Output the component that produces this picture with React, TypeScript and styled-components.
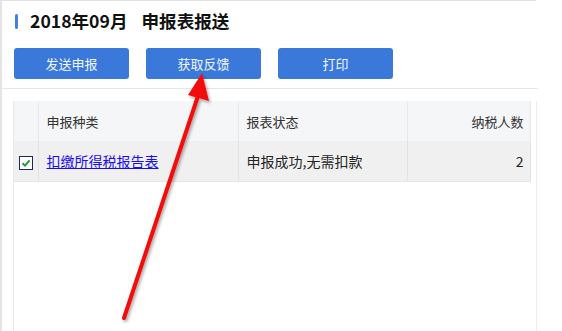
import React from "react";
import styled, { createGlobalStyle } from "styled-components";

const GlobalStyle = createGlobalStyle`
  html, body {
    margin: 0;
    padding: 0;
    background: #ffffff;
  }
  body {
    font-family: "Noto Sans CJK SC", "Noto Sans", sans-serif;
    color: #333333;
  }
`;

const Page = styled.div`
  position: relative;
  width: 562px;
  height: 331px;
  overflow: hidden;
  background: #ffffff;
  border-left: 2px solid #e4e4e4;
  box-sizing: border-box;
`;

const Panel = styled.div`
  width: 534px;
  height: 100%;
  border-top: 1px solid #e2e2e2;
  display: flex;
  flex-direction: column;
`;

const TitleRow = styled.div`
  display: flex;
  align-items: center;
  gap: 12px;
  padding: 9px 0 0 13px;
  height: 22px;
`;

const TitleMark = styled.span`
  width: 3px;
  height: 15px;
  border-radius: 2px;
  background: #3d82e6;
`;

const Title = styled.h1`
  margin: 0;
  font-size: 17.6px;
  font-weight: 700;
  color: #111111;
  line-height: 22px;
  & > span + span {
    margin-left: 14px;
  }
`;

const Toolbar = styled.div`
  display: flex;
  gap: 17px;
  padding: 16px 0 9px 12px;
  width: 536px;
  border-bottom: 1px solid #e6e6e6;
  box-sizing: border-box;
`;

const ActionButton = styled.button`
  width: 115px;
  height: 31px;
  border: none;
  border-radius: 3px;
  background: #3a79d9;
  color: #f2f6fd;
  font-family: "Noto Sans CJK SC", sans-serif;
  font-size: 13px;
  padding: 0;
  cursor: pointer;
`;

const TableArea = styled.div`
  flex: 1;
  margin: 12px 0 0 11px;
  width: 522px;
  border-left: 1px solid #e8e8e8;
  border-right: 1px solid #ededed;
`;

const Table = styled.table`
  border-collapse: collapse;
  table-layout: fixed;
  width: 516px;
`;

const HeadCell = styled.th<{ $align?: string; $w: number }>`
  width: ${(p) => p.$w}px;
  height: 40px;
  padding: 0 6px 0 8px;
  background: #f5f6f8;
  border-right: 1px solid #e9e9e9;
  font-size: 13px;
  font-weight: 400;
  color: #333333;
  text-align: ${(p) => p.$align || "left"};
  box-sizing: border-box;
`;

const Cell = styled.td<{ $align?: string }>`
  height: 40px;
  padding: 0 6px 0 8px;
  background: #f0f0f0;
  border-right: 1px solid #e2e2e2;
  border-bottom: 1px solid #e6e6e6;
  font-size: 14px;
  color: #222222;
  text-align: ${(p) => p.$align || "left"};
  box-sizing: border-box;
`;

const CheckCell = styled(Cell)`
  padding: 0 0 0 5px;
`;

const Check = styled.span`
  display: inline-flex;
  align-items: center;
  justify-content: center;
  width: 14px;
  height: 14px;
  border: 1.5px solid #1b2a5c;
  background: #ffffff;
  box-sizing: border-box;
  vertical-align: middle;
`;

const ReportLink = styled.a`
  color: #1a0df0;
  text-decoration: underline;
  font-size: 14px;
`;

const Arrow = styled.svg`
  position: absolute;
  left: 0;
  top: 0;
  pointer-events: none;
`;

const columns = [
  { key: "check", label: "", w: 24 },
  { key: "type", label: "申报种类", w: 200 },
  { key: "state", label: "报表状态", w: 169 },
  { key: "count", label: "纳税人数", w: 123, align: "right" },
];

export default function App() {
  return (
    <>
      <GlobalStyle />
      <Page>
        <Panel>
          <TitleRow>
            <TitleMark />
            <Title>
              <span>2018年09月</span>
              <span>申报表报送</span>
            </Title>
          </TitleRow>
          <Toolbar>
            <ActionButton>发送申报</ActionButton>
            <ActionButton>获取反馈</ActionButton>
            <ActionButton>打印</ActionButton>
          </Toolbar>
          <TableArea>
            <Table>
              <thead>
                <tr>
                  {columns.map((c) => (
                    <HeadCell key={c.key} $w={c.w} $align={c.align}>
                      {c.label}
                    </HeadCell>
                  ))}
                </tr>
              </thead>
              <tbody>
                <tr>
                  <CheckCell>
                    <Check>
                      <svg width="10" height="10" viewBox="0 0 10 10">
                        <path
                          d="M1.5 5.2 L4 7.6 L8.6 2.4"
                          fill="none"
                          stroke="#1f9a2e"
                          strokeWidth="2"
                        />
                      </svg>
                    </Check>
                  </CheckCell>
                  <Cell>
                    <ReportLink href="#">扣缴所得税报告表</ReportLink>
                  </Cell>
                  <Cell>申报成功,无需扣款</Cell>
                  <Cell $align="right">2</Cell>
                </tr>
              </tbody>
            </Table>
          </TableArea>
        </Panel>
        <Arrow width="562" height="331" viewBox="0 0 562 331">
          <defs>
            <filter id="shadow" x="-50%" y="-50%" width="200%" height="200%">
              <feDropShadow dx="1.5" dy="2" stdDeviation="1.5" floodColor="#000" floodOpacity="0.35" />
            </filter>
          </defs>
          <g filter="url(#shadow)">
            <path
              d="M122 318 L196 96"
              stroke="#f21010"
              strokeWidth="4"
              strokeLinecap="round"
              fill="none"
            />
            <path d="M200 73 L207 101 L186 95 Z" fill="#f21010" />
          </g>
        </Arrow>
      </Page>
    </>
  );
}
